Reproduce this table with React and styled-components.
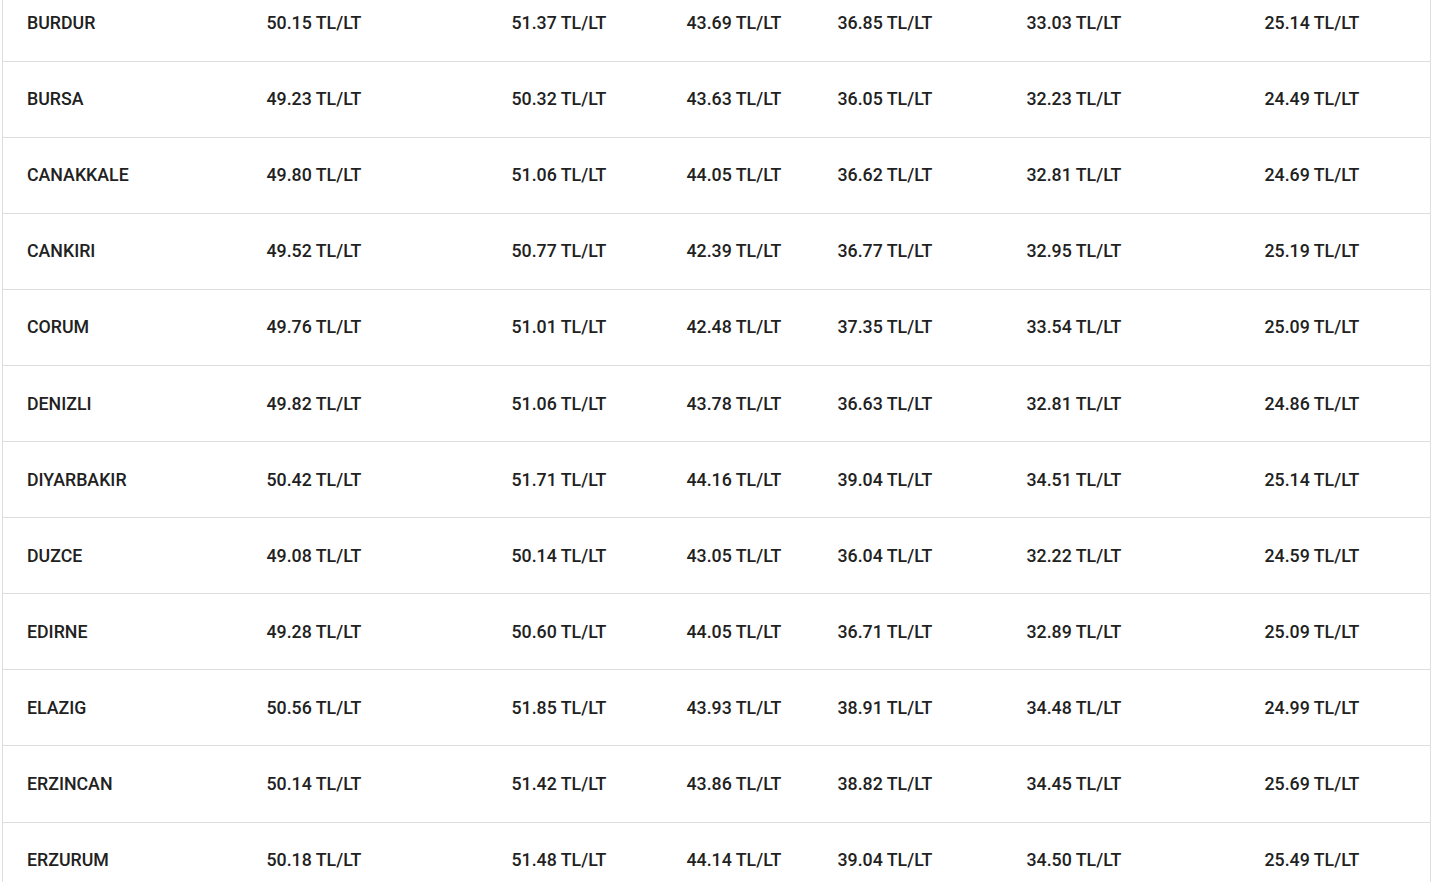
import React from "react";
import styled, { createGlobalStyle } from "styled-components";

const GlobalStyle = createGlobalStyle`
  html, body {
    margin: 0;
    padding: 0;
    background: #ffffff;
    overflow: hidden;
  }
`;

const Page = styled.div`
  padding: 0 2px;
  margin-top: -14.5px;
`;

const Table = styled.table`
  width: 100%;
  border-collapse: collapse;
  table-layout: fixed;
  border-left: 1px solid #dedede;
  border-right: 1px solid #dedede;
  font-family: Roboto, "Liberation Sans", sans-serif;
  font-weight: 500;
  font-size: 17.75px;
  color: #212121;
`;

const Row = styled.tr`
  border-bottom: 1px solid #dedede;
`;

const Cell = styled.td`
  height: 75.1px;
  padding: 0 0 0 24px;
  line-height: 20px;
  white-space: nowrap;
  vertical-align: middle;
`;

const widths = [240, 245, 175, 151, 189, 238, 190];

const rows = [
  ["BURDUR", "50.15", "51.37", "43.69", "36.85", "33.03", "25.14"],
  ["BURSA", "49.23", "50.32", "43.63", "36.05", "32.23", "24.49"],
  ["CANAKKALE", "49.80", "51.06", "44.05", "36.62", "32.81", "24.69"],
  ["CANKIRI", "49.52", "50.77", "42.39", "36.77", "32.95", "25.19"],
  ["CORUM", "49.76", "51.01", "42.48", "37.35", "33.54", "25.09"],
  ["DENIZLI", "49.82", "51.06", "43.78", "36.63", "32.81", "24.86"],
  ["DIYARBAKIR", "50.42", "51.71", "44.16", "39.04", "34.51", "25.14"],
  ["DUZCE", "49.08", "50.14", "43.05", "36.04", "32.22", "24.59"],
  ["EDIRNE", "49.28", "50.60", "44.05", "36.71", "32.89", "25.09"],
  ["ELAZIG", "50.56", "51.85", "43.93", "38.91", "34.48", "24.99"],
  ["ERZINCAN", "50.14", "51.42", "43.86", "38.82", "34.45", "25.69"],
  ["ERZURUM", "50.18", "51.48", "44.14", "39.04", "34.50", "25.49"],
];

const App = () => {
  return (
    <Page>
      <GlobalStyle />
      <Table>
        <colgroup>
          {widths.map((w, i) => (
            <col key={i} style={{ width: w }} />
          ))}
        </colgroup>
        <tbody>
          {rows.map(([city, ...prices]) => (
            <Row key={city}>
              <Cell>{city}</Cell>
              {prices.map((p, i) => (
                <Cell key={i}>{p} TL/LT</Cell>
              ))}
            </Row>
          ))}
        </tbody>
      </Table>
    </Page>
  );
};

export default App;
